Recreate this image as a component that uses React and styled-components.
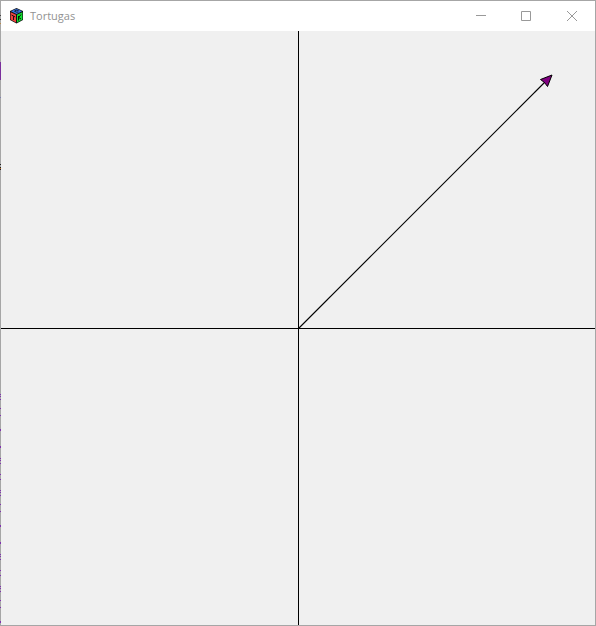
import React from "react";
import styled, { createGlobalStyle } from "styled-components";

const GlobalStyle = createGlobalStyle`
  * { box-sizing: border-box; }
  body { margin: 0; background: #a6a6a6; }
`;

const stripe = (y, h, color) =>
  `linear-gradient(${color}, ${color}) 0 ${y}px / 1px ${h}px no-repeat`;

const edgeMarks = [
  stripe(15, 1, "#444"),
  stripe(19, 1, "#333"),
  stripe(23, 1, "#b98a4a"),
  stripe(62, 18, "#7a2f9c"),
  stripe(97, 1, "#7f7fb0"),
  stripe(164, 1, "#222"),
  stripe(167, 1, "#222"),
  stripe(168, 1, "#b06a20"),
  stripe(169, 1, "#223"),
  ...[394, 396, 399, 408, 415, 458, 460, 463, 474, 479, 490, 492, 495, 504, 511, 554, 556, 559, 570, 575, 586, 588, 591, 600, 607].map((y) =>
    stripe(y, 1, "#8030b0")
  ),
  ...[429, 446, 525, 542, 621].map((y) => stripe(y, 2, "#8030b0")),
].join(", ");

const Window = styled.main`
  display: flex;
  flex-direction: column;
  min-height: 100vh;
  padding: 1px;
  background: ${edgeMarks}, #a6a6a6;
`;

const TitleBar = styled.header`
  display: flex;
  align-items: center;
  height: 30px;
  padding-left: 7px;
  background: #fff;
`;

const AppIcon = styled.svg`
  display: block;
  flex: none;
  width: 16px;
  height: 16px;
`;

const Title = styled.h1`
  flex: 1;
  margin: 0;
  padding-left: 6px;
  color: #929292;
  font: 400 11px/16px "Open Sans", "Noto Sans", sans-serif;
`;

const WindowButton = styled.button`
  display: flex;
  align-items: center;
  justify-content: center;
  width: 46px;
  height: 30px;
  padding: 0;
  border: 0;
  background: transparent;
  color: #999;
  &:hover { background: ${(p) => (p.$danger ? "#e81123" : "#e5e5e5")}; }
`;

const Glyph = styled.svg`
  display: block;
  width: 12px;
  height: 12px;
  fill: none;
  stroke: currentColor;
`;

const Plot = styled.section`
  flex: 1;
  background: #f0f0f0;
`;

const Drawing = styled.svg`
  display: block;
  width: 100%;
`;

function CubeIcon() {
  return (
    <AppIcon viewBox="0 0 16 16" aria-hidden="true">
      <path d="M8.5 0 15 3V12L8.5 15.5 2 12V3Z" fill="#101010" />
      <path d="M8.5 0.7 14 3.2 8.5 6 3 3.2Z" fill="#3a78e8" />
      <path d="M2.6 4.2 8 6.8V14.5L2.6 11.6Z" fill="#f04440" />
      <path d="M9 6.8 14.4 4.2V11.6L9 14.5Z" fill="#10e030" />
      <path d="M10.5 2.5 8 2 6.5 3.2 8.5 4.2 10.5 4" fill="none" stroke="#101830" />
      <path d="M3.5 7 7.2 9M5.5 8.2V12" fill="none" stroke="#181010" />
      <path d="M10.5 8V12.5M13 6.5 10.7 9.5 13 11" fill="none" stroke="#081808" />
    </AppIcon>
  );
}

export default function App() {
  return (
    <>
      <GlobalStyle />
      <Window>
        <TitleBar>
          <CubeIcon />
          <Title>Tortugas</Title>
          <WindowButton type="button" aria-label="Minimize">
            <Glyph viewBox="0 0 12 12"><path d="M2 5.5H12" /></Glyph>
          </WindowButton>
          <WindowButton type="button" aria-label="Maximize">
            <Glyph viewBox="0 0 12 12"><path d="M1.5 1.5H10.5V10.5H1.5Z" /></Glyph>
          </WindowButton>
          <WindowButton type="button" aria-label="Close" $danger>
            <Glyph viewBox="0 0 12 12"><path d="M1 1 11 11M11 1 1 11" /></Glyph>
          </WindowButton>
        </TitleBar>
        <Plot>
          <Drawing viewBox="0 0 594 594" role="img" aria-label="Turtle path across the axes">
            <path d="M297.5 0V594M0 297.5H594" stroke="#000" shapeRendering="crispEdges" />
            <path d="M297.5 297.5 546 49" stroke="#000" strokeWidth="1.1" />
            <path d="M551 44 546.5 55.5 543.5 51.5 539.5 48.5Z" fill="#800080" stroke="#000" />
          </Drawing>
        </Plot>
      </Window>
    </>
  );
}
